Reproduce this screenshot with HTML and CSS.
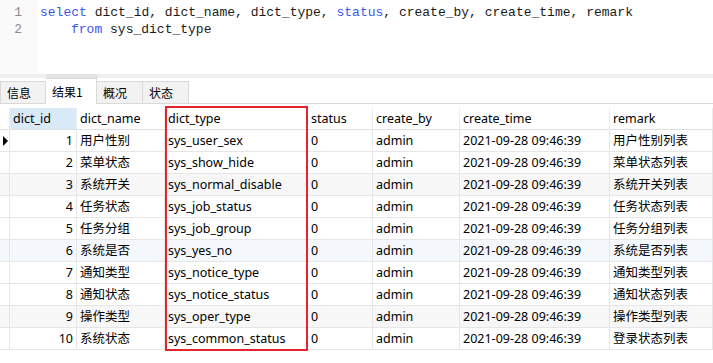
FILE: index.html
```html
<!DOCTYPE html>
<html lang="zh-CN">
<head>
    <meta charset="UTF-8">
    <title>sys_dict_type 查询结果</title>
    <link rel="stylesheet" href="styles.css">
</head>
<body>
    <div class="editor">
        <div class="gutter">
            <div>1</div>
            <div>2</div>
        </div>
        <div class="code">
            <div class="line"><span class="kw">select</span> <span>dict_id, dict_name, dict_type,</span> <span class="kw">status</span><span>, create_by, create_time, remark</span></div>
            <div class="line indent"><span class="kw">from</span> <span>sys_dict_type</span></div>
        </div>
    </div>
    <div class="hscroll"><div class="thumb"></div></div>

    <div class="tabs">
        <div class="tab">信息</div>
        <div class="tab active">结果1</div>
        <div class="tab">概况</div>
        <div class="tab">状态</div>
    </div>

    <div class="grid-wrap">
        <div class="grid">
            <div class="row head">
                <div class="cell ind"></div>
                <div class="cell sel">dict_id</div>
                <div class="cell">dict_name</div>
                <div class="cell">dict_type</div>
                <div class="cell">status</div>
                <div class="cell">create_by</div>
                <div class="cell">create_time</div>
                <div class="cell">remark</div>
            </div>
            <div class="row">
                <div class="cell ind"><span class="arrow"></span></div>
                <div class="cell num">1</div><div class="cell">用户性别</div><div class="cell">sys_user_sex</div>
                <div class="cell">0</div><div class="cell">admin</div><div class="cell">2021-09-28 09:46:39</div><div class="cell">用户性别列表</div>
            </div>
            <div class="row">
                <div class="cell ind"></div>
                <div class="cell num">2</div><div class="cell">菜单状态</div><div class="cell">sys_show_hide</div>
                <div class="cell">0</div><div class="cell">admin</div><div class="cell">2021-09-28 09:46:39</div><div class="cell">菜单状态列表</div>
            </div>
            <div class="row alt">
                <div class="cell ind"></div>
                <div class="cell num">3</div><div class="cell">系统开关</div><div class="cell">sys_normal_disable</div>
                <div class="cell">0</div><div class="cell">admin</div><div class="cell">2021-09-28 09:46:39</div><div class="cell">系统开关列表</div>
            </div>
            <div class="row">
                <div class="cell ind"></div>
                <div class="cell num">4</div><div class="cell">任务状态</div><div class="cell">sys_job_status</div>
                <div class="cell">0</div><div class="cell">admin</div><div class="cell">2021-09-28 09:46:39</div><div class="cell">任务状态列表</div>
            </div>
            <div class="row">
                <div class="cell ind"></div>
                <div class="cell num">5</div><div class="cell">任务分组</div><div class="cell">sys_job_group</div>
                <div class="cell">0</div><div class="cell">admin</div><div class="cell">2021-09-28 09:46:39</div><div class="cell">任务分组列表</div>
            </div>
            <div class="row hover">
                <div class="cell ind"></div>
                <div class="cell num">6</div><div class="cell">系统是否</div><div class="cell">sys_yes_no</div>
                <div class="cell">0</div><div class="cell">admin</div><div class="cell">2021-09-28 09:46:39</div><div class="cell">系统是否列表</div>
            </div>
            <div class="row">
                <div class="cell ind"></div>
                <div class="cell num">7</div><div class="cell">通知类型</div><div class="cell">sys_notice_type</div>
                <div class="cell">0</div><div class="cell">admin</div><div class="cell">2021-09-28 09:46:39</div><div class="cell">通知类型列表</div>
            </div>
            <div class="row">
                <div class="cell ind"></div>
                <div class="cell num">8</div><div class="cell">通知状态</div><div class="cell">sys_notice_status</div>
                <div class="cell">0</div><div class="cell">admin</div><div class="cell">2021-09-28 09:46:39</div><div class="cell">通知状态列表</div>
            </div>
            <div class="row alt">
                <div class="cell ind"></div>
                <div class="cell num">9</div><div class="cell">操作类型</div><div class="cell">sys_oper_type</div>
                <div class="cell">0</div><div class="cell">admin</div><div class="cell">2021-09-28 09:46:39</div><div class="cell">操作类型列表</div>
            </div>
            <div class="row">
                <div class="cell ind"></div>
                <div class="cell num">10</div><div class="cell">系统状态</div><div class="cell">sys_common_status</div>
                <div class="cell">0</div><div class="cell">admin</div><div class="cell">2021-09-28 09:46:39</div><div class="cell">登录状态列表</div>
            </div>
        </div>
        <div class="mark"></div>
    </div>
</body>
</html>
```

FILE: styles.css
```css
/* Dasar halaman */
body {
    margin: 0;
    width: 713px;
    height: 363px;
    overflow: hidden;
    background: #fff;
    font-family: "Noto Sans", "Noto Sans CJK SC", sans-serif;
    font-size: 12.5px;
    color: #000;
}

/* Editor SQL */
.editor {
    display: flex;
    height: 74px;
    background: #fff;
}

.gutter {
    width: 38px;
    padding-top: 4px;
    padding-right: 16px;
    box-sizing: border-box;
    background: #fafafa;
    text-align: right;
    font-family: "Liberation Mono", monospace;
    font-size: 13px;
    line-height: 17px;
    color: #8a8a8a;
}

.code {
    padding: 4px 0 0 2px;
    font-family: "Liberation Mono", monospace;
    font-size: 13px;
    line-height: 17px;
    color: #1a1a1a;
}

.line {
    white-space: pre;
}

.line.indent {
    padding-left: 31px;
}

.kw {
    color: #3b56f0;
}

.hscroll {
    height: 4px;
    background: #f0f0f0;
    padding-left: 46px;
}

.thumb {
    width: 52px;
    height: 4px;
    background: #e4e4e4;
}

/* Tab hasil */
.tabs {
    display: flex;
    align-items: flex-start;
    height: 25px;
    border-bottom: 1px solid #d9d9d9;
    font-size: 12px;
}

.tab {
    width: 46px;
    height: 22px;
    margin-top: 3px;
    box-sizing: border-box;
    padding-left: 6px;
    line-height: 21px;
    background: #f2f2f2;
    border: 1px solid #d9d9d9;
    border-bottom: none;
    font-family: "Noto Sans CJK SC", sans-serif;
}

.tab + .tab {
    border-left: none;
}

.tab.active {
    width: 51px;
    height: 26px;
    margin-top: 0;
    padding-top: 2px;
    background: #fff;
    position: relative;
    z-index: 1;
}

/* Tabel hasil */
.grid-wrap {
    position: relative;
    margin-top: 4px;
}

.grid {
    display: flex;
    flex-direction: column;
}

.row {
    display: grid;
    grid-template-columns: 10px 67px 88px 143px 65px 87px 150px 103px;
    height: 22px;
}

.row.alt {
    background: #f7f7f7;
}

.row.hover {
    background: #f4f8fc;
}

.cell {
    box-sizing: border-box;
    height: 22px;
    padding-left: 3px;
    line-height: 21px;
    border-right: 1px solid #e6e6e6;
    border-bottom: 1px solid #e6e6e6;
    white-space: nowrap;
    overflow: hidden;
}

.head .cell {
    border-right-color: #ececec;
    border-bottom-color: #e0e0e0;
}

.head .sel {
    background: #d9e9f8;
}

.cell.ind {
    padding: 0;
    position: relative;
}

.cell.num {
    text-align: right;
    padding-right: 3px;
}

.arrow {
    position: absolute;
    left: 3px;
    top: 6px;
    border-top: 5px solid transparent;
    border-bottom: 5px solid transparent;
    border-left: 5px solid #000;
}

/* Kotak penanda kolom dict_type */
.mark {
    position: absolute;
    left: 165px;
    top: -2px;
    width: 143px;
    height: 245px;
    box-sizing: border-box;
    border: 2px solid #e3262d;
}
```
